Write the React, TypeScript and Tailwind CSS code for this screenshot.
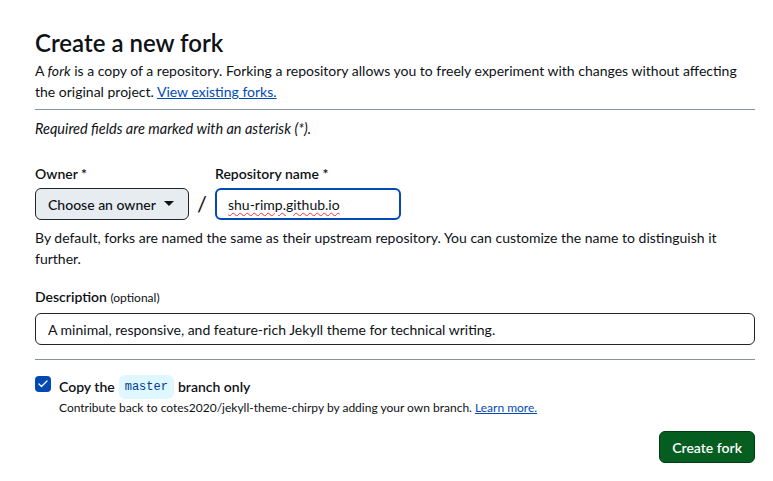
import { Check } from 'lucide-react';

export default function App() {
  return (
    <div className="min-h-screen bg-white text-[#0e1116] font-['Lato',sans-serif]">
      <div className="ml-[35px] w-[720px] pt-[28px]">
        <h1 className="text-[24px] leading-[30px] font-semibold">Create a new fork</h1>
        <p className="mt-[2px] text-[14px] leading-[21px]">
          A <em>fork</em> is a copy of a repository. Forking a repository allows you to freely experiment with changes without affecting the original project.{' '}
          <a href="#" className="text-[#0349b4] underline">View existing forks.</a>
        </p>
        <hr className="mt-[7px] border-t border-[#88929d]" />
        <p className="mt-[9px] text-[14.5px] leading-[20px] italic">Required fields are marked with an asterisk (*).</p>

        <div className="mt-[25px] flex items-end gap-[8px]">
          <div className="flex flex-col">
            <label className="text-[14px] leading-[20px] font-semibold">Owner *</label>
            <button className="mt-[4px] flex h-[32px] w-[154px] items-center justify-between rounded-[6px] border border-[#20252c] bg-[#e7ecf0] pl-[12px] pr-[14px] text-[14px] font-medium">
              Choose an owner
              <svg width="10" height="6" viewBox="0 0 10 6"><path d="M0 0h10L5 5z" fill="#0e1116" /></svg>
            </button>
          </div>
          <span className="mb-[2px] text-[22px] leading-[28px]">/</span>
          <div className="flex flex-col">
            <label className="text-[14px] leading-[20px] font-semibold">Repository name *</label>
            <div className="mt-[4px] flex h-[32px] w-[186px] items-center rounded-[6px] border-2 border-[#0349b4] px-[11px] text-[14px]">
              <span className="underline decoration-wavy decoration-red-500 decoration-1 underline-offset-2">shu-rimp.github.io</span>
            </div>
          </div>
        </div>
        <p className="mt-[7px] text-[14px] leading-[21px] text-[#0e1116]">
          By default, forks are named the same as their upstream repository. You can customize the name to distinguish it further.
        </p>

        <div className="mt-[15px]">
          <label className="text-[14px] leading-[20px] font-semibold">
            Description <span className="text-[12px] font-normal">(optional)</span>
          </label>
          <div className="mt-[5px] flex h-[32px] items-center rounded-[6px] border border-[#20252c] px-[12px] text-[14px]">
            A minimal, responsive, and feature-rich Jekyll theme for technical writing.
          </div>
        </div>
        <hr className="mt-[14px] border-t border-[#88929d]" />

        <div className="mt-[15px] flex gap-[8px]">
          <div className="mt-[1px] flex h-[16px] w-[16px] shrink-0 items-center justify-center rounded-[4px] bg-[#0349b4]">
            <Check size={12} strokeWidth={2.5} color="white" />
          </div>
          <div>
            <div className="flex items-center text-[14px] leading-[20px] font-semibold">
              Copy the
              <code className="mx-[4px] rounded-[6px] bg-[#dff7ff] px-[6px] py-[2px] font-['Liberation_Mono',monospace] text-[12px] font-normal text-[#023b95]">master</code>
              branch only
            </div>
            <p className="text-[12px] leading-[18px]">
              Contribute back to cotes2020/jekyll-theme-chirpy by adding your own branch.{' '}
              <a href="#" className="text-[#0349b4] underline">Learn more.</a>
            </p>
          </div>
        </div>

        <div className="mt-[14px] flex justify-end">
          <button className="h-[32px] rounded-[6px] border border-[#033b14] bg-[#055d20] px-[12px] text-[14px] font-semibold text-white">
            Create fork
          </button>
        </div>
      </div>
    </div>
  );
}
